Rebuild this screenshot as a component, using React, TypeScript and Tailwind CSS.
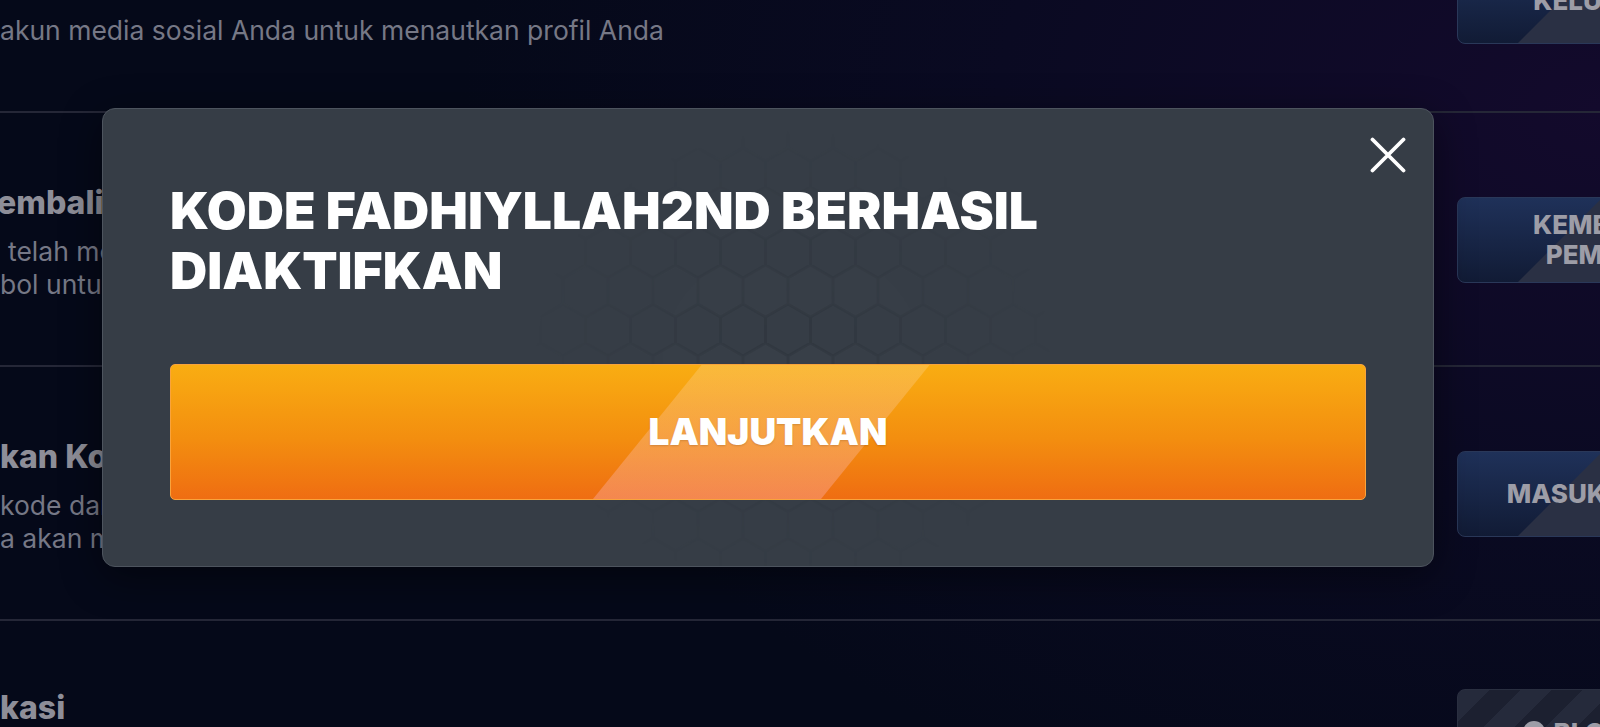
import React from 'react';

const font = "font-['Inter','Noto_Sans',sans-serif]";

type SideButtonProps = {
  lines: string[];
  className?: string;
};

const SideButton = ({ lines, className = '' }: SideButtonProps) => (
  <div
    className={`relative flex h-[86px] shrink-0 flex-col items-center justify-center overflow-hidden rounded-[8px] border border-[#2a3859] bg-[linear-gradient(180deg,#1f3159,#111b35)] ${className}`}
  >
    <div className="absolute bottom-0 left-[60px] h-full w-[500px] origin-bottom-left -skew-x-45 bg-[#2a3044]" />
    {lines.map((line) => (
      <span key={line} className="relative text-[26px] leading-[30px] font-extrabold text-[#9d9da7]">
        {line}
      </span>
    ))}
  </div>
);

const StripedButton = () => (
  <div className="-mr-[115px] mt-[68px] flex h-[86px] w-[258px] shrink-0 items-center justify-center gap-2 overflow-hidden rounded-[8px] border border-[#2a2f40] bg-[repeating-linear-gradient(135deg,#252a3b_0px,#252a3b_22px,#1c2030_22px,#1c2030_44px)]">
    <span className="h-[22px] w-[22px] rounded-full bg-[#9d9da7]" />
    <span className="text-[26px] font-extrabold text-[#9d9da7]">BLOKIR</span>
  </div>
);

const Row = ({ children }: { children: React.ReactNode }) => (
  <div className="flex h-[254px] shrink-0 items-start justify-between border-b-2 border-[#252737]">
    {children}
  </div>
);

const HexPattern = () => (
  <svg className="pointer-events-none absolute inset-0 h-full w-full" aria-hidden>
    <defs>
      <pattern id="hex" width="45" height="78" patternUnits="userSpaceOnUse" x="10" y="0">
        <path
          d="M22.5 0L45 13V39L22.5 52L0 39V13Z M22.5 52V78"
          fill="rgba(255,255,255,0.012)"
          stroke="rgba(20,24,30,0.16)"
          strokeWidth="3"
        />
      </pattern>
      <radialGradient id="fade" cx="0.5" cy="0.5" r="0.5">
        <stop offset="0" stopColor="white" stopOpacity="1" />
        <stop offset="1" stopColor="white" stopOpacity="0" />
      </radialGradient>
      <mask id="hexmask">
        <ellipse cx="690" cy="250" rx="260" ry="230" fill="url(#fade)" />
      </mask>
    </defs>
    <rect width="100%" height="100%" fill="url(#hex)" mask="url(#hexmask)" />
  </svg>
);

const Modal = () => (
  <div className="absolute left-[102px] top-[108px] h-[459px] w-[1332px] overflow-hidden rounded-[13px] border border-[#4d545e] bg-[#363d46] px-[67px] pt-[71px] shadow-[0_10px_40px_rgba(0,0,0,0.45)]">
    <HexPattern />
    <button className="absolute right-[27px] top-[28px] text-white" aria-label="Tutup">
      <svg width="36" height="36" viewBox="0 0 36 36" fill="none">
        <path d="M2.5 2.5L33.5 33.5M33.5 2.5L2.5 33.5" stroke="white" strokeWidth="3.8" strokeLinecap="round" />
      </svg>
    </button>
    <h2 className="relative whitespace-nowrap text-[51.5px] leading-[60px] font-black text-white">
      KODE FADHIYLLAH2ND BERHASIL
      <br />
      DIAKTIFKAN
    </h2>
    <button className="relative mt-[64px] flex h-[136px] w-full items-center justify-center overflow-hidden rounded-[5px] border border-[#f9a33c] bg-[linear-gradient(180deg,#f9ad12,#f38e0f_55%,#ef6d12)]">
      <span className="absolute bottom-0 left-[422px] h-full w-[228px] origin-bottom-left -skew-x-[39deg] bg-[linear-gradient(180deg,rgba(255,235,200,0.22),rgba(255,190,210,0.32))]" />
      <span className="relative text-[37px] font-black text-white [text-shadow:0_1px_2px_rgba(0,0,0,0.15)]">
        LANJUTKAN
      </span>
    </button>
  </div>
);

export default function App() {
  return (
    <div
      className={`relative h-[727px] w-full overflow-hidden bg-[radial-gradient(ellipse_75%_110%_at_100%_15%,#130a2c,#0a0a22_50%,#050919_95%)] ${font}`}
    >
      <div className="-mt-[141px] flex flex-col">
        <Row>
          <div className="flex flex-col whitespace-nowrap pt-[104px]">
            <span className="text-[32px] leading-[40px] font-extrabold text-[#8e8e98]">Tautkan Akun</span>
            <span className="mt-[11px] text-[26.5px] leading-[33px] text-[#767886]">
              akun media sosial Anda untuk menautkan profil Anda
            </span>
          </div>
          <SideButton lines={['KELUAR']} className="-mr-[115px] mt-[99px] w-[258px]" />
        </Row>
        <Row>
          <div className="flex flex-col whitespace-nowrap pt-[70px]">
            <span className="-ml-[3px] text-[32px] leading-[40px] font-extrabold text-[#8e8e98]">embalikan Pembelian</span>
            <span className="mt-[12px] pl-[8px] text-[26.5px] leading-[33px] text-[#767886]">
              telah melakukan pembelian sebelumnya?
            </span>
            <span className="text-[26.5px] leading-[33px] text-[#767886]">bol untuk memulihkan pembelian Anda</span>
          </div>
          <SideButton lines={['KEMBALIKAN', 'PEMBELIAN']} className="-mr-[187px] mt-[84px] w-[330px]" />
        </Row>
        <Row>
          <div className="flex flex-col whitespace-nowrap pt-[70px]">
            <span className="text-[32px] leading-[40px] font-extrabold text-[#8e8e98]">kan Kode Promo</span>
            <span className="mt-[12px] text-[26.5px] leading-[33px] text-[#767886]">kode dan dapatkan hadiahnya</span>
            <span className="text-[26.5px] leading-[33px] text-[#767886]">a akan menerima hadiah di kotak masuk</span>
          </div>
          <SideButton lines={['MASUKKAN']} className="-mr-[115px] mt-[84px] w-[258px]" />
        </Row>
        <Row>
          <div className="flex flex-col whitespace-nowrap pt-[67px]">
            <span className="text-[32px] leading-[40px] font-extrabold text-[#8e8e98]">kasi</span>
          </div>
          <StripedButton />
        </Row>
      </div>
      <Modal />
    </div>
  );
}
